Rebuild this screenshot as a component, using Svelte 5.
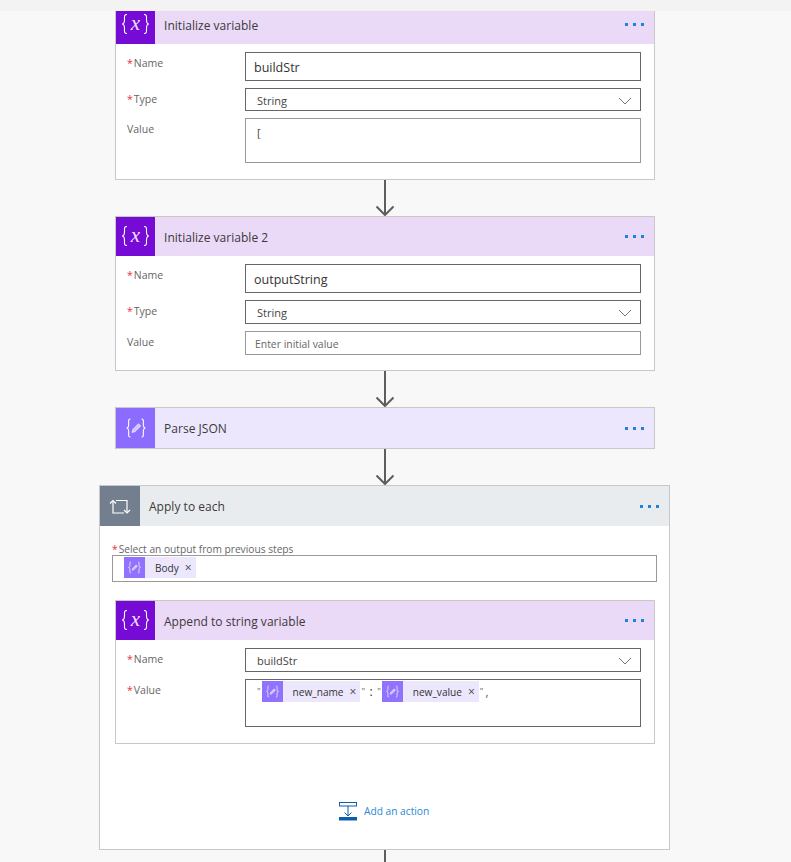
<script>
</script>

{#snippet varIcon()}
  <span class="icon var">
    <svg width="39" height="39" viewBox="0 0 39 39" fill="none" stroke="#fff" stroke-width="1.1">
      <path d="M11 9.5C8 9.5 8.5 11.5 8.5 14.5C8.5 17.5 8 19 6 19C8 19 8.5 20.5 8.5 23.5C8.5 26.5 8 28.5 11 28.5" />
      <path d="M28 9.5C31 9.5 30.5 11.5 30.5 14.5C30.5 17.5 31 19 33 19C31 19 30.5 20.5 30.5 23.5C30.5 26.5 31 28.5 28 28.5" />
      <text x="19.5" y="24.5" text-anchor="middle" class="xglyph" fill="#fff" fill-opacity="0.9" stroke="none">x</text>
    </svg>
  </span>
{/snippet}

{#snippet parseGlyph(size)}
  <svg width={size} height={size} viewBox="0 0 24 24" fill="none" stroke="#fff" stroke-width="1.1">
    <path d="M6.5 3C4 3 4.7 5 4.7 8C4.7 10.5 4 12 2.5 12C4 12 4.7 13.5 4.7 16C4.7 19 4 21 6.5 21" />
    <path d="M17.5 3C20 3 19.3 5 19.3 8C19.3 10.5 20 12 21.5 12C20 12 19.3 13.5 19.3 16C19.3 19 20 21 17.5 21" />
    <path d="M8 16.5L8.8 13.5L14.5 7.7L16.8 10L11 15.7Z" fill="#fff" fill-opacity="0.6" stroke-width="0.6" />
  </svg>
{/snippet}

{#snippet dots()}
  <span class="dots"><i></i><i></i><i></i></span>
{/snippet}

{#snippet chevron()}
  <svg class="chev" width="14" height="8" viewBox="0 0 14 8" fill="none" stroke="#777" stroke-width="1"><path d="M1 1L7 7L13 1" /></svg>
{/snippet}

{#snippet arrow()}
  <svg class="arrow" width="20" height="36" viewBox="0 0 20 36" fill="none" stroke="#605e5c" stroke-width="2">
    <path d="M10 0V35" />
    <path d="M1.5 26.5L10 35L18.5 26.5" />
  </svg>
{/snippet}

{#snippet chip(label)}
  <span class="chip">
    <span class="chip-icon">{@render parseGlyph(15)}</span>
    <span class="chip-label">{label}</span>
    <span class="chip-x">×</span>
  </span>
{/snippet}

<div class="topbar"></div>
<main>
  <section class="card first">
    <header class="head purple">
      {@render varIcon()}
      <h2>Initialize variable</h2>
      {@render dots()}
    </header>
    <div class="form">
      <label class="req">Name</label>
      <div class="input tall">buildStr</div>
      <label class="req">Type</label>
      <div class="input select short">String {@render chevron()}</div>
      <label>Value</label>
      <div class="input area">[</div>
    </div>
  </section>

  {@render arrow()}

  <section class="card">
    <header class="head purple">
      {@render varIcon()}
      <h2>Initialize variable 2</h2>
      {@render dots()}
    </header>
    <div class="form compact">
      <label class="req">Name</label>
      <div class="input tall">outputString</div>
      <label class="req">Type</label>
      <div class="input select">String {@render chevron()}</div>
      <label>Value</label>
      <div class="input plain placeholder">Enter initial value</div>
    </div>
  </section>

  {@render arrow()}

  <section class="card">
    <header class="head lilac">
      <span class="icon parse">{@render parseGlyph(24)}</span>
      <h2>Parse JSON</h2>
      {@render dots()}
    </header>
  </section>

  {@render arrow()}

  <section class="card outer">
    <header class="head grey">
      <span class="icon loop">
        <svg width="40" height="40" viewBox="0 0 40 40" fill="none" stroke="#fff" stroke-width="1.2">
          <path d="M13 15V27H24" /><path d="M10 17.5L13 14.5L16 17.5" />
          <path d="M16 14.5H27V27" /><path d="M24 24L27 27L30 24" />
        </svg>
      </span>
      <h2>Apply to each</h2>
      {@render dots()}
    </header>
    <div class="outer-body">
      <label class="req wide">Select an output from previous steps</label>
      <div class="input output">{@render chip('Body')}</div>

      <section class="card inner">
        <header class="head purple">
          {@render varIcon()}
          <h2>Append to string variable</h2>
          {@render dots()}
        </header>
        <div class="form">
          <label class="req">Name</label>
          <div class="input select small">buildStr {@render chevron()}</div>
          <label class="req">Value</label>
          <div class="input tokens">
            <span class="q">"</span>
            {@render chip('new_name')}
            <span class="q">"</span><span class="colon">:</span><span class="q">"</span>
            {@render chip('new_value')}
            <span class="q">"</span><span class="comma">,</span>
          </div>
        </div>
      </section>

      <div class="add">
        <svg width="19" height="19" viewBox="0 0 19 19" fill="none">
          <rect x="0.5" y="0.5" width="17" height="3.5" stroke="#0f5fa8" />
          <path d="M9 4V14" stroke="#0f5fa8" /><path d="M5.5 10.5L9 14L12.5 10.5" stroke="#0f5fa8" />
          <rect x="0" y="15" width="18" height="3.5" fill="#0f5fa8" />
        </svg>
        <span class="add-label">Add an action</span>
      </div>
    </div>
  </section>

  <div class="tail"></div>
</main>

<style>
  :global(body) {
    background: #f8f8f8;
    font-family: "Open Sans", "Noto Sans", "Liberation Sans", sans-serif;
    color: #333;
  }
  .topbar { height: 11px; background: #f3f3f3; }
  main {
    width: 770px;
    height: 851px;
    overflow: hidden;
    display: flex;
    flex-direction: column;
    align-items: center;
  }
  .card {
    width: 540px;
    box-sizing: border-box;
    flex: none;
    background: #fff;
    border: 1px solid #c8c8c8;
  }
  .first { margin-top: -7px; }
  .outer { width: 571px; align-self: flex-start; margin-left: 99px; }
  .head { display: flex; align-items: center; height: 40px; }
  .purple { background: #ead9f7; height: 39px; }
  .lilac { background: #ece7fd; }
  .grey { background: #e9ecef; }
  .icon { flex: none; display: flex; align-items: center; justify-content: center; width: 39px; height: 100%; }
  .var { background: #770bd6; }
  .parse { background: #8c6cff; }
  .loop { background: #737f8f; width: 40px; }
  .xglyph { font: italic 21px "Liberation Serif", serif; }
  h2 { flex: 1; margin: 2px 0 0 9px; font-size: 12px; font-weight: 400; color: #3b3a39; line-height: 16px; letter-spacing: 0.03px; }
  .dots { display: flex; gap: 5px; padding-right: 10px; }
  .dots i { width: 3px; height: 3px; background: #1a84dc; }
  .arrow { flex: none; display: block; margin-left: -1px; }
  .form {
    display: grid;
    grid-template-columns: 118px 1fr;
    row-gap: 7px;
    padding: 8px 13px 16px 11px;
  }
  .compact { padding-bottom: 15px; }
  label { font-size: 10.5px; line-height: 16px; padding-top: 3px; color: #666; display: block; }
  .req::before { content: "*"; color: #e8303a; margin-right: 1px; }
  .input {
    box-sizing: border-box;
    background: #fff;
    border: 1px solid #666;
    font-size: 11px;
    color: #444;
    display: flex;
    align-items: center;
    position: relative;
  }
  .tall { height: 29px; padding: 2px 0 0 8px; font-size: 12.5px; color: #333; }
  .select { height: 24px; padding: 1px 8px 0 11px; justify-content: space-between; }
  .short { height: 23px; padding-top: 2px; }
  .area { height: 45px; align-items: flex-start; padding: 6px 11px; border-color: #999; }
  .plain { height: 24px; padding: 2px 0 0 9px; border-color: #999; }
  .placeholder { color: #666; font-size: 10.4px; }
  .outer-body { padding: 17px 12px 0; height: 323px; box-sizing: border-box; }
  .inner { margin: 18px 0 0 3px; }
  .wide { padding: 0; line-height: 12px; font-size: 10.2px; }
  .output { height: 27px; width: 545px; border-color: #999; padding: 0 0 2px 11px; }
  .tokens { height: 48px; border-color: #666; align-items: flex-start; padding: 1px 0 0 10px; }
  .chip { display: inline-flex; align-items: center; height: 21px; background: #ece7fd; flex: none; }
  .chip-icon { display: flex; align-items: center; justify-content: center; width: 21px; height: 21px; background: #8c6cff; opacity: 0.95; }
  .chip-label { font-size: 10.1px; margin-left: 10px; color: #333; }
  .chip-x { font-size: 12px; margin: 0 4px 0 6px; color: #444; line-height: 12px; }
  .q, .colon, .comma { color: #666; font-size: 9px; line-height: 21px; padding: 0 1px; }
  .colon { font-size: 12px; color: #333; padding: 0 3.5px; }
  .comma { font-size: 12px; }
  .add { display: flex; align-items: center; gap: 6px; margin: 57px 0 0 227px; height: 19px; color: #2b88d8; font-size: 10.2px; }
  .add svg { margin-top: 2px; }
  .tail { width: 2px; height: 14px; background: #605e5c; flex: none; }
</style>
